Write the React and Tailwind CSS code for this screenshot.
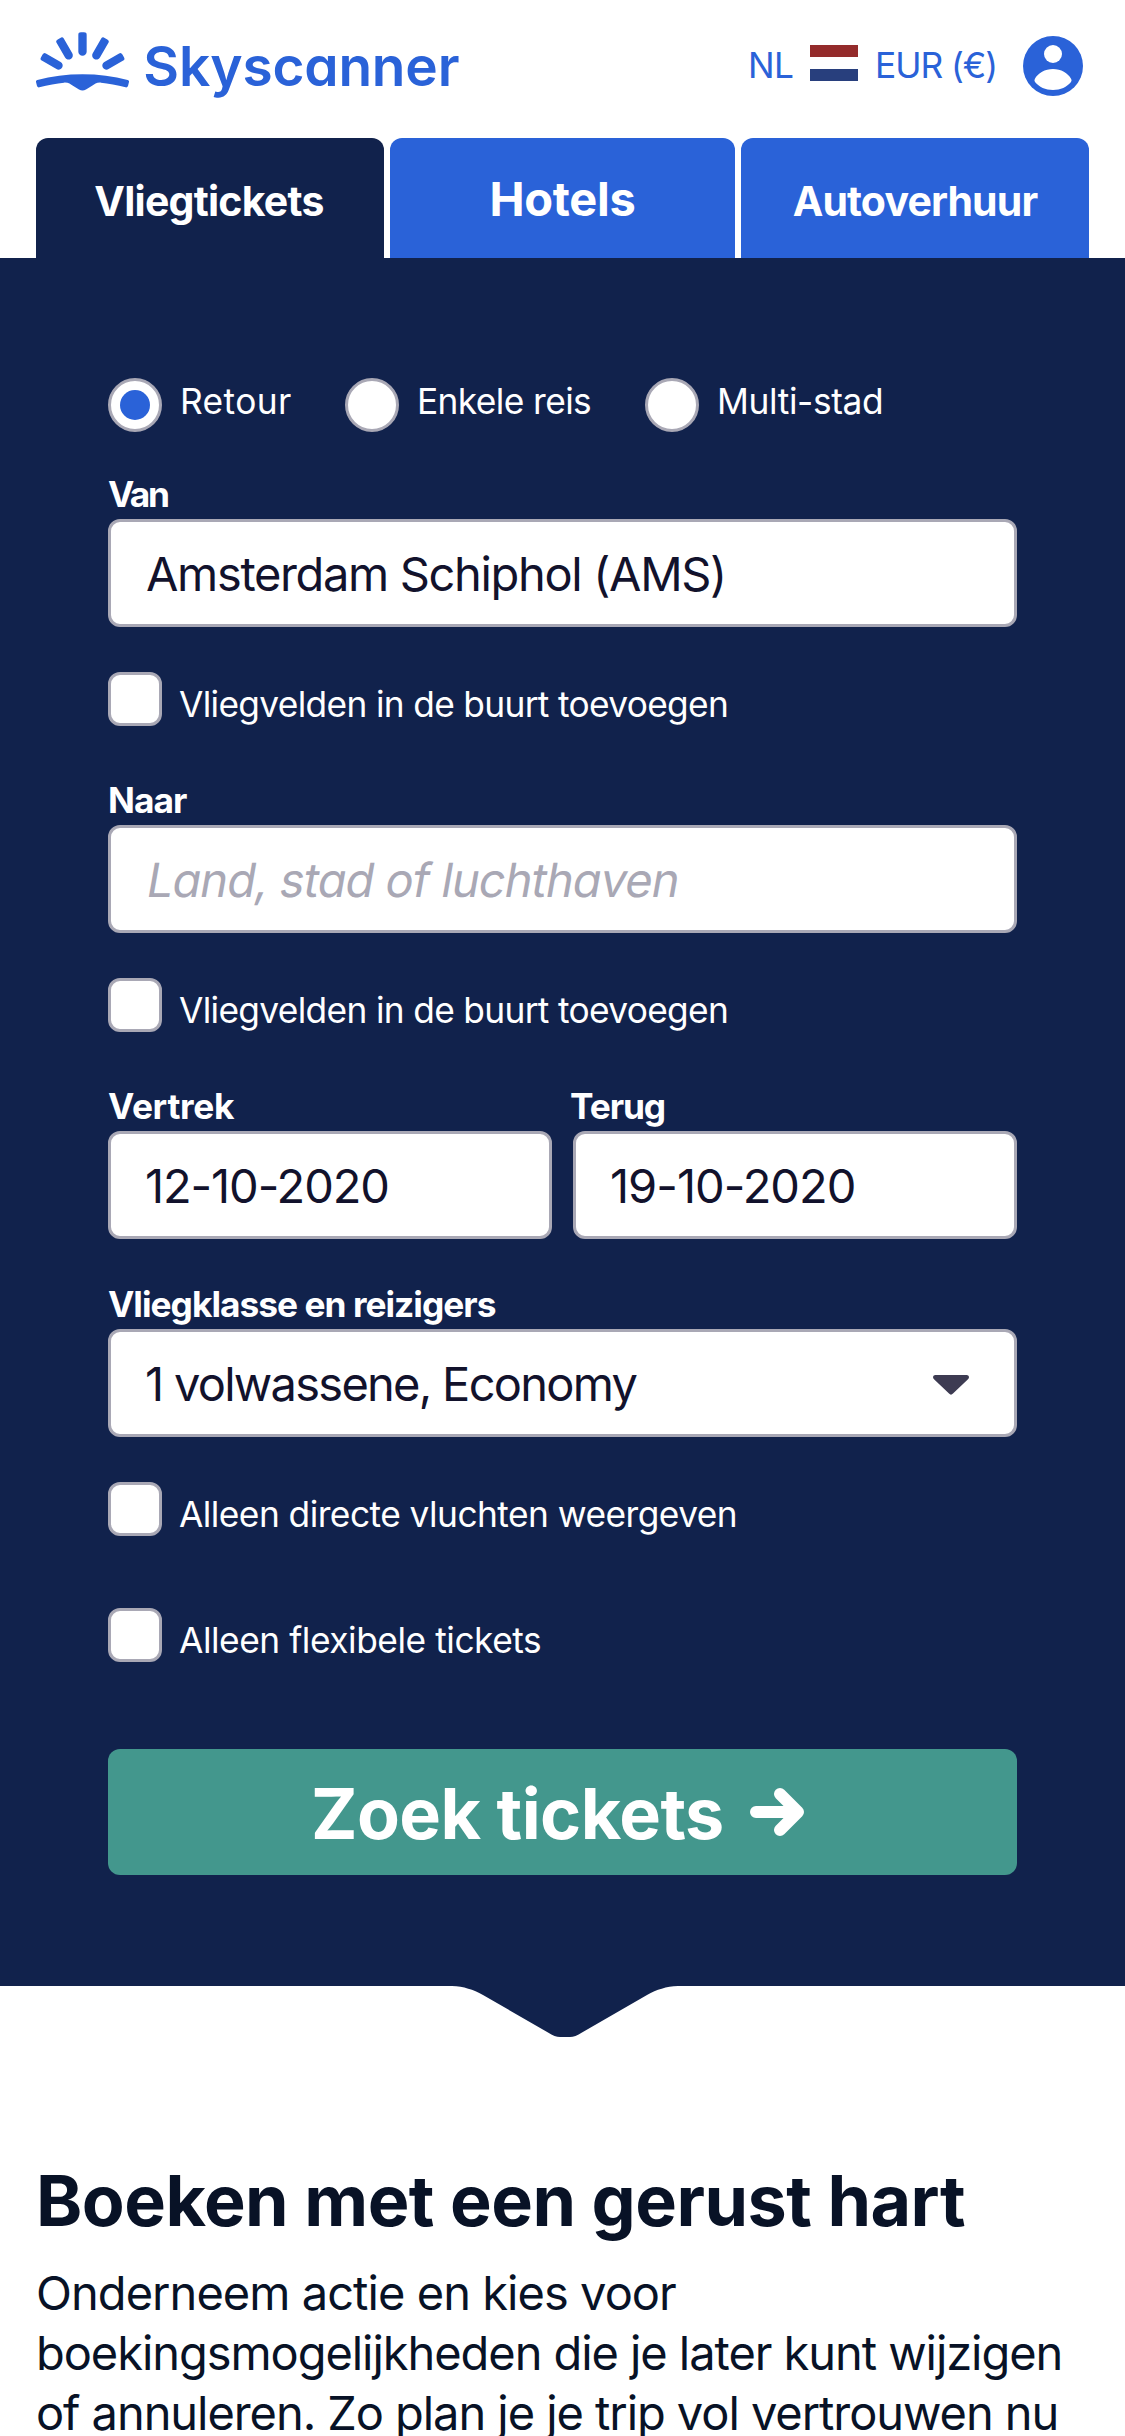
import React from "react";

const RAY = "M243 96 H252 Q260 96 260 103 V154 A12.5 12.5 0 0 1 235 154 V103 Q235 96 243 96 Z";

function LogoMark() {
  return (
    <svg viewBox="108 95 280 176" className="mt-8 h-[58.67px] w-[93.33px] shrink-0 fill-[#2a62d8]">
      {[-60, -30, 0, 30, 60].map((angle) => (
        <path key={angle} d={RAY} transform={`rotate(${angle} 247.5 237)`} />
      ))}
      <path d="M112 239 C154 228 200 222 247.5 222 C295 222 341 228 383 239 Q388 240 387 245 L384 257 Q382 262 377 261 C351 254 325 249 303 247 C290 246 284 252 275 257 L258 267.500 Q247.500 273 237 267.500 L220 257 C211 252 205 246 192 247 C170 249 144 254 118 261 Q113 262 111 257 L108 245 Q107 240 112 239 Z" />
    </svg>
  );
}

function Header() {
  return (
    <header className="flex h-[138px] items-start pr-[42px] pl-9 text-[#2a62d8]">
      <LogoMark />
      <span className="mt-9 ml-[14px] text-[55px] leading-[60px] font-semibold tracking-[-0.2px] [font-feature-settings:'cv11']">
        Skyscanner
      </span>
      <div className="ml-auto flex items-start text-[35.3px] leading-10">
        <span className="mt-[46px] w-[62px] tracking-[-0.6px]">NL</span>
        <span className="mt-[45px] flex h-9 w-12 flex-col">
          <span className="h-3 bg-[#942b2b]" />
          <span className="h-3 bg-white" />
          <span className="h-3 bg-[#283f7d]" />
        </span>
        <span className="mt-[46px] ml-[17px] w-[148px] tracking-[-1.04px] whitespace-nowrap">EUR (€)</span>
        <svg viewBox="0 0 60 60" className="mt-9 size-[60px]">
          <circle cx="30" cy="30" r="30" fill="#2a62d8" />
          <circle cx="30" cy="18" r="9" fill="#fff" />
          <path d="M11.800 43 C15 37 22 33 30 33 S45 37 48.200 43 Q49 44.500 48 46 C44 51 37.500 54 30 54 S16 51 12 46 Q11 44.500 11.800 43 Z" fill="#fff" />
        </svg>
      </div>
    </header>
  );
}

function Tabs() {
  return (
    <nav className="flex h-[120px] gap-1.5 px-9 text-center font-bold text-white">
      <a className="w-[348px] rounded-t-xl bg-[#11224c] pt-[39px] pr-0.5 text-[41px] leading-[48px] tracking-[-0.76px]">Vliegtickets</a>
      <a className="w-[345px] rounded-t-xl bg-[#2a62d8] pt-[37px] text-[47px] leading-[48px] tracking-[-0.28px]">Hotels</a>
      <a className="w-[348px] rounded-t-xl bg-[#2a62d8] pt-[39px] text-[41px] leading-[48px] tracking-[-0.86px]">Autoverhuur</a>
    </nav>
  );
}

function Radio({ checked, className, children }) {
  return (
    <label className={`flex items-start gap-[18px] text-[35.3px] leading-[47px] whitespace-nowrap text-white ${className}`}>
      <span className="flex size-[54px] shrink-0 items-center justify-center rounded-full border-[3px] border-[#a9a8b5] bg-white">
        {checked && <span className="size-[30px] rounded-full bg-[#2a62d8]" />}
      </span>
      <span>{children}</span>
    </label>
  );
}

function Check({ className, children }) {
  return (
    <label className={`flex h-[54px] items-start gap-[17px] text-[35.3px] leading-[65px] whitespace-nowrap text-white ${className}`}>
      <span className="size-[54px] shrink-0 rounded-xl border-[3px] border-[#a9a8b5] bg-white" />
      <span>{children}</span>
    </label>
  );
}

function Label({ className, children }) {
  return (
    <div className={`mb-1.5 pt-px text-[35.3px] leading-9 font-bold whitespace-nowrap text-white ${className}`}>{children}</div>
  );
}

function Field({ className = "", children }) {
  return (
    <div className={`flex h-[108px] items-center rounded-xl border-[3px] border-[#a9a8b5] bg-white pt-0.5 pr-[45px] pl-[34px] text-[47px] leading-[60px] whitespace-nowrap text-[#12122c] ${className}`}>
      {children}
    </div>
  );
}

function SearchPanel() {
  return (
    <section className="h-[1728px] bg-[#11224c] px-[108px] pt-[120px]">
      <div className="flex h-[54px]">
        <Radio checked className="w-[237px] tracking-[0.4px]">Retour</Radio>
        <Radio className="w-[300px] tracking-[-0.6px]">Enkele reis</Radio>
        <Radio className="tracking-[-0.36px]">Multi-stad</Radio>
      </div>

      <Label className="mt-11 tracking-[-2.4px]">Van</Label>
      <Field className="tracking-[-1.34px]">
        <span className="pl-px">Amsterdam Schiphol (AMS)</span>
      </Field>
      <Check className="mt-[45px] tracking-[-0.67px]">Vliegvelden in de buurt toevoegen</Check>

      <Label className="mt-14 tracking-[-0.96px]">Naar</Label>
      <Field>
        <span className="origin-[0_75%] -skew-x-10 tracking-[-0.95px] text-[#a9a8b5] [font-feature-settings:'cv11']">Land, stad of luchthaven</span>
      </Field>
      <Check className="mt-[45px] tracking-[-0.67px]">Vliegvelden in de buurt toevoegen</Check>

      <div className="mt-14 grid grid-cols-2 gap-[21px]">
        <div>
          <Label className="tracking-[-0.3px]">Vertrek</Label>
          <Field className="tracking-[-1.1px]">12-10-2020</Field>
        </div>
        <div>
          <Label className="-ml-[3px] tracking-[-1.1px]">Terug</Label>
          <Field className="tracking-[-1px]">19-10-2020</Field>
        </div>
      </div>

      <Label className="mt-[47px] tracking-[-0.98px]">Vliegklasse en reizigers</Label>
      <Field className="justify-between tracking-[-1.72px]">
        <span>1 volwassene, Economy</span>
        <svg viewBox="0 0 36 20" className="mt-0.5 h-5 w-9 fill-[#3d3b52]">
          <path d="M2 0 H34 Q36 0.300 36 2 Q36 3.300 35 4.300 L20 18.500 Q18 20.800 16 18.500 L1 4.300 Q0 3.300 0 2 Q0 0.300 2 0 Z" />
        </svg>
      </Field>
      <Check className="mt-[45px] tracking-[-0.54px]">Alleen directe vluchten weergeven</Check>
      <Check className="mt-[72px] tracking-[-0.45px]">Alleen flexibele tickets</Check>

      <button className="mt-[87px] flex h-[126px] w-full items-center rounded-xl bg-[#43978d] pl-[203px] text-[70px] font-bold text-white">
        <span className="w-[439px] pt-[3px] text-left leading-[84px] tracking-[-0.54px] whitespace-nowrap">Zoek tickets</span>
        <svg viewBox="0 0 54 48" fill="none" stroke="#fff" strokeWidth="12" strokeLinecap="round" strokeLinejoin="round" className="h-12 w-[54px]">
          <path d="M6 24 H46 M30 6 L48 24 L30 42" />
        </svg>
      </button>
    </section>
  );
}

export default function App() {
  return (
    <div className="h-[2436px] w-[1125px] overflow-hidden bg-white font-['Inter',sans-serif]">
      <Header />
      <Tabs />
      <SearchPanel />
      <svg viewBox="0 0 226 51" className="ml-[451.5px] block h-[51px] w-[226px] fill-[#11224c]">
        <path d="M0 0 C12 0.500 21 3.500 31 9 L96 46.500 Q103 51 108 51 H118 Q123 51 130 46.500 L195 9 C205 3.500 214 0.500 226 0 Z" />
      </svg>
      <main className="px-9 pt-[122px] text-[#081226]">
        <h1 className="text-[70px] leading-[84px] font-bold tracking-[-0.51px] whitespace-nowrap">Boeken met een gerust hart</h1>
        <p className="mt-5 text-[47px] leading-[60px] tracking-[-1.06px] whitespace-nowrap">
          <span className="tracking-[-0.95px]">Onderneem actie en kies voor</span>
          <br />
          boekingsmogelijkheden die je later kunt wijzigen
          <br />
          of annuleren. Zo plan je je trip vol vertrouwen nu
        </p>
      </main>
    </div>
  );
}
